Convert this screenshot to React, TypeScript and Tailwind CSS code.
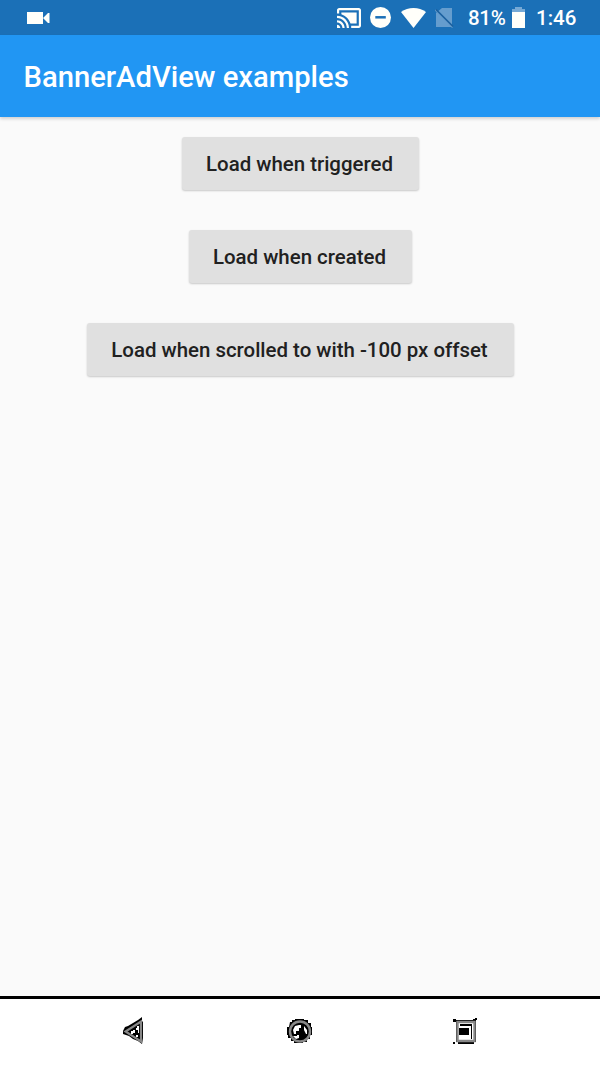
import React from "react";

function StatusBar() {
  return (
    <div className="flex h-[35px] items-center bg-[#1b70b7] pl-[27px] pr-[23px] text-white">
      <svg className="h-[12px] w-[23px]" viewBox="0 0 23 12" fill="#fffffa">
        <path d="M0 0h16v12H0zM16 6l5-5h1.500v10H21z" />
      </svg>
      <div className="ml-auto flex h-full items-center">
        <svg className="mr-[9px] h-[20px] w-[24px]" viewBox="1 3 22 18" preserveAspectRatio="none" fill="#fffffa">
          <path d="M1 18v3h3c0-1.660-1.340-3-3-3zm0-4v2c2.760 0 5 2.240 5 5h2c0-3.870-3.130-7-7-7zm18-7H5v1.630c3.960 1.280 7.090 4.410 8.370 8.370H19V7zM1 10v2c4.970 0 9 4.030 9 9h2c0-6.080-4.930-11-11-11zm20-7H3c-1.100 0-2 .9-2 2v3h2V5h18v14h-7v2h7c1.100 0 2-.9 2-2V5c0-1.100-.9-2-2-2z" />
        </svg>
        <svg className="mr-[10px] h-[21px] w-[21px]" viewBox="0 0 21 21">
          <circle cx="10.5" cy="10.5" r="10.500" fill="#fffffa" />
          <path d="M5.300 10.300h10.500" stroke="#1b70b7" strokeWidth="2.500" />
        </svg>
        <svg className="mr-[9px] h-[20px] w-[25px]" viewBox="0 0 25 20" fill="#fffffa">
          <path d="M0 4Q5.500 0 12.500 0T25 4L12.500 20z" />
        </svg>
        <svg className="mr-[14px] h-[21px] w-[19px]" viewBox="0 0 19 21">
          <path d="M7 1h10v19H1V6z" fill="#659dce" />
          <path d="M0 3l17.500 17.500" stroke="#659dce" strokeWidth="1.200" />
          <path d="M1 2.500l17 17" stroke="#1b609f" strokeWidth="1.700" />
        </svg>
        <span className="mt-[2px] w-[44px] whitespace-nowrap text-[20.500px] font-medium leading-[35px] tracking-[-0.3px]">81%</span>
        <svg className="mr-[11px] h-[21px] w-[13px]" viewBox="0 0 13 21">
          <path d="M0 2h3V0h7v2h3v4H0z" fill="#76a9d5" />
          <path d="M0 5h13v16H0z" fill="#fffffa" />
        </svg>
        <span className="mt-[2px] w-[41px] whitespace-nowrap text-[20.500px] font-medium leading-[35px]">1:46</span>
      </div>
    </div>
  );
}

function RaisedButton({ label, className }: { label: string; className: string }) {
  return (
    <button
      className={`h-[53px] whitespace-nowrap rounded-[3px] bg-[#e0e0e0] pr-[1px] pt-[1px] text-[20.430px] font-medium leading-[52px] text-[#212121] shadow-[0_1px_2px_rgba(0,0,0,0.2)] ${className}`}
    >
      {label}
    </button>
  );
}

function NavigationBar() {
  return (
    <nav className="flex h-[70px] items-start justify-center gap-[115px] border-t-[3px] border-black bg-white pt-[7px]">
      <svg className="mt-[8px] h-[34px] w-[50px]" viewBox="0 0 50 34">
        <path d="M13 17l2-4 3-1 10-6 4-3v4l1 1v16l-1 6-4-3-5-2-4-3-6-2z" fill="#000" />
        <path d="M31 7.500v20L15.500 17.500z" fill="#000" stroke="#888" strokeWidth="2.200" />
        <path d="M21 17h2v-1h2v3h-2v1h-2zM27 12h2v7h-1v-3h-2v-2h1zM26 21h2v2h-2z" fill="#fff" />
      </svg>
      <svg className="mt-[8px] h-[34px] w-[50px]" viewBox="0 0 50 34">
        <path d="M15 8h2V6h3V5h9v1h4v3h3v4h1v8h-2v4h-3v3h-4v1h-9v-2h-3v-3h-3v-3h-1v-8h2z" fill="#000" />
        <circle cx="25" cy="17.5" r="10" fill="#000" stroke="#888" strokeWidth="2.400" />
        <path d="M18 16l2-4 4-1h2v3h-2v3h-3v3h-2zM29 12l3 4v4h-1l-2-4zM18 22h4v-1h2v3l-3 1z" fill="#fff" />
      </svg>
      <svg className="mt-[8px] h-[34px] w-[50px]" viewBox="0 0 50 34">
        <path d="M13 5h3v1h17V5h2V4h2v2h-1v22h-2v2H18v-2h-2V8h-3zM13 28h2v2h-2z" fill="#000" />
        <path d="M17.500 8h17v19h-17z" fill="#fff" stroke="#888" strokeWidth="2.400" />
        <path d="M20 10h12v15h-1V12H20zM19 14h10v7H19z" fill="#000" />
      </svg>
    </nav>
  );
}

export default function App() {
  return (
    <div className="flex h-[1066px] w-[600px] flex-col overflow-hidden bg-[#fafafa] font-['Roboto',sans-serif]">
      <StatusBar />
      <header className="z-10 flex h-[82px] items-center bg-[#2196f3] pl-[23.500px] shadow-[0_2px_3px_rgba(0,0,0,0.16)]">
        <h1 className="mt-[2px] whitespace-nowrap text-[29.200px] font-medium leading-[40px] text-white">BannerAdView examples</h1>
      </header>
      <main className="flex flex-1 flex-col items-center gap-[40px] pt-[20px]">
        <RaisedButton label="Load when triggered" className="w-[237px]" />
        <RaisedButton label="Load when created" className="w-[223px]" />
        <RaisedButton label="Load when scrolled to with -100 px offset" className="w-[427px]" />
      </main>
      <NavigationBar />
    </div>
  );
}
